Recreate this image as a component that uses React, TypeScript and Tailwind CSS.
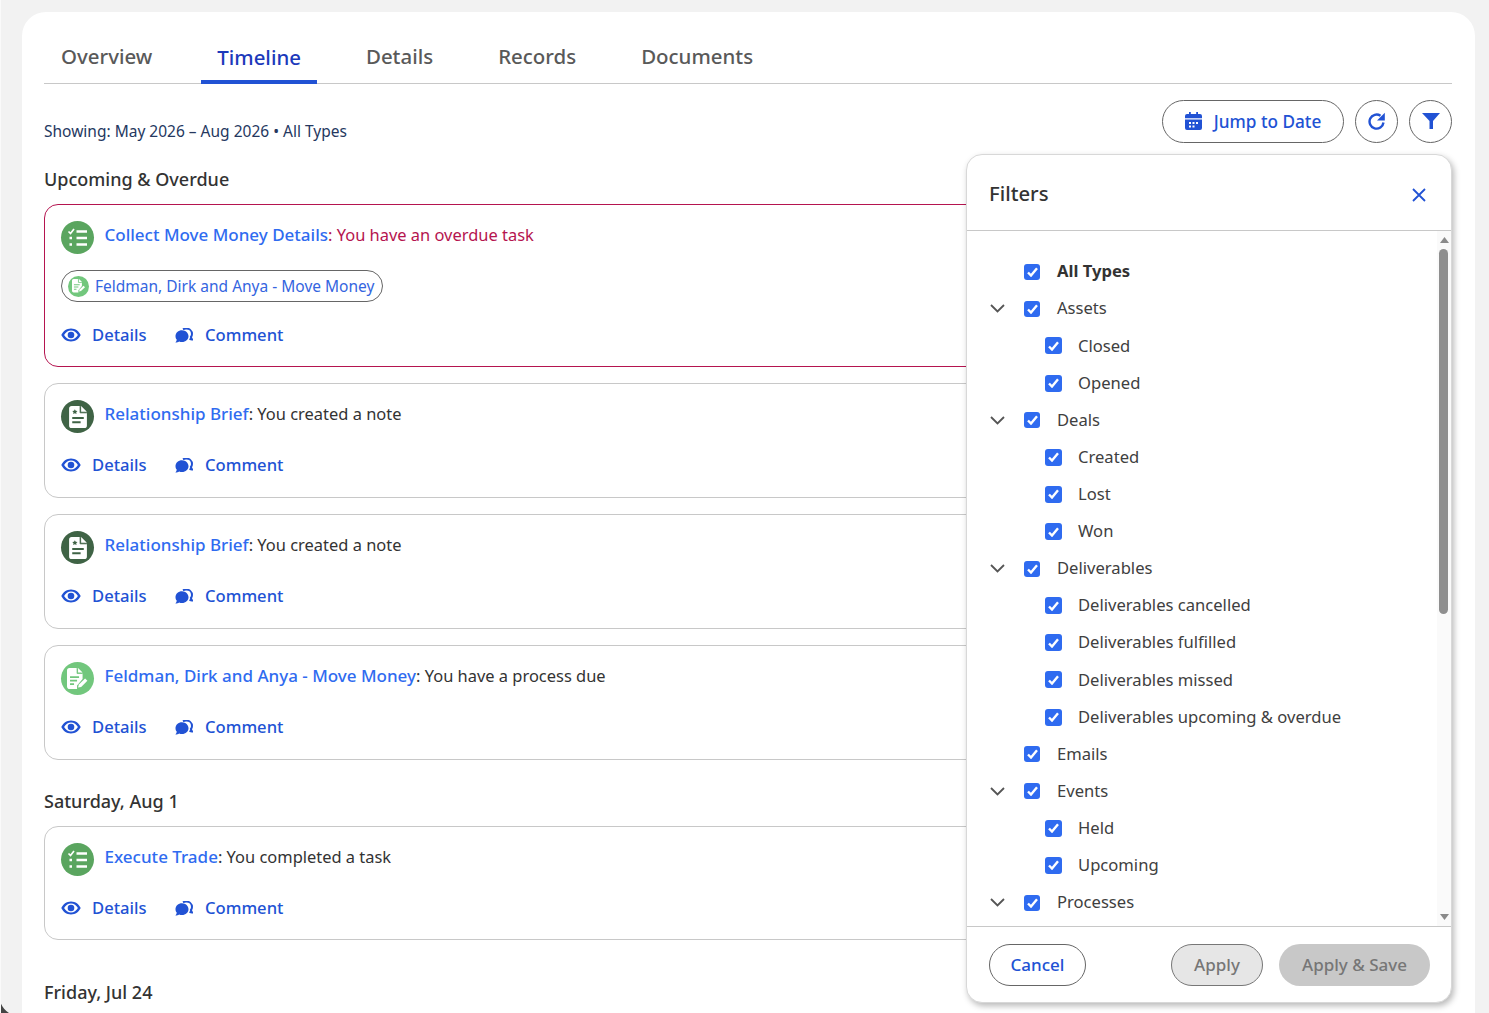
import React from "react";

const FONT = "font-['Noto_Sans',sans-serif]";

function CheckIcon({ kind }: { kind: "task" | "note" | "process" }) {
  if (kind === "task")
    return (
      <span className="flex h-[33px] w-[33px] shrink-0 items-center justify-center rounded-full bg-[#5aa55f]">
        <svg width="21" height="21" viewBox="0 0 21 21" fill="none" stroke="#fff" strokeWidth="2.300">
          <path d="M1.500 4.500l2 2 3.500-4.500" strokeWidth="1.700" />
          <path d="M9.500 4.500H20M9.500 11H20M9.500 17.500H20" />
          <path d="M2.500 11h2.500M2.500 17.500h2.500" />
        </svg>
      </span>
    );
  if (kind === "note")
    return (
      <span className="flex h-[33px] w-[33px] shrink-0 items-center justify-center rounded-full bg-[#3f6345]">
        <svg width="18" height="22" viewBox="0 0 17 21">
          <path d="M2.500 0H10.500L17 6.500V18.500a2.500 2.500 0 0 1-2.500 2.500h-12A2.500 2.500 0 0 1 0 18.500V2.500A2.500 2.500 0 0 1 2.500 0z" fill="#fff" />
          <path d="M10.500 0v6.500H17" fill="#3f6345" stroke="#3f6345" strokeWidth="0.8" />
          <path d="M11.500 0L17 5.500h-5.500z" fill="#fff" />
          <path d="M3 11.500h11M3 15.500h8" stroke="#3f6345" strokeWidth="1.900" />
          <path d="M5.500 3l.8 1.600 1.700.2-1.200 1.200.3 1.700-1.600-.8-1.600.8.3-1.700L3 4.800l1.700-.2z" fill="#3f6345" />
        </svg>
      </span>
    );
  return <ProcessIcon size={33} />;
}

function ProcessIcon({ size }: { size: number }) {
  const s = size * 0.64;
  return (
    <span
      className="flex shrink-0 items-center justify-center rounded-full bg-[#72c77d]"
      style={{ width: size, height: size }}
    >
      <svg width={s} height={s} viewBox="0 0 21 21">
        <path d="M2.500 0H10L15.500 5.500V11L10 17.500V21H2.500A2.500 2.500 0 0 1 0 18.500V2.500A2.500 2.500 0 0 1 2.500 0z" fill="#fff" />
        <path d="M10 0v5.500h5.500" fill="#72c77d" stroke="#72c77d" strokeWidth="0.8" />
        <path d="M11 0l4.500 4.500H11z" fill="#fff" />
        <path d="M3 9h9M3 12.500h7M3 16h4" stroke="#72c77d" strokeWidth="1.700" />
        <path d="M11 19.500l.8-3L18 10.500l2.300 2.200-6.200 6.100z" fill="#fff" />
      </svg>
    </span>
  );
}

function Eye() {
  return (
    <svg width="20" height="14" viewBox="0 0 20 14" fill="none">
      <path
        fillRule="evenodd"
        fill="#2152d4"
        d="M10 .5C5.500.5 2 3.300.300 7 2 10.700 5.500 13.500 10 13.500S18 10.700 19.700 7C18 3.300 14.500.5 10 .5zM10 2.500c3 0 5.400 1.800 6.900 4.500-1.500 2.700-3.900 4.500-6.900 4.500S4.600 9.700 3.100 7C4.600 4.300 7 2.500 10 2.500z"
      />
      <circle cx="10" cy="7" r="3.300" fill="#2152d4" />
    </svg>
  );
}

function Bubbles() {
  return (
    <svg width="18" height="15" viewBox="0 0 18 15" fill="#2152d4">
      <path d="M7 2.200C3.300 2.200.5 4.800.5 8.200c0 1.400.5 2.600 1.300 3.500-.2 1-.7 2-1.400 2.800 1.500 0 2.800-.5 3.700-1.100.9.400 1.800.6 2.900.6 3.700 0 6.500-2.600 6.500-5.800S10.700 2.200 7 2.200z" />
      <path
        d="M8 1.300C8.900.8 10 .6 11.100.6c3.400 0 5.900 2.300 5.900 5.300 0 1.200-.4 2.300-1.100 3.100.2.900.6 1.800 1.100 2.400-1 0-1.800-.3-2.500-.6"
        fill="none"
        stroke="#2152d4"
        strokeWidth="2"
      />
    </svg>
  );
}

function Actions() {
  return (
    <div className="flex items-center text-[16.6px] font-medium leading-6 text-[#2152d4]">
      <span className="flex w-[114px] items-center">
        <span className="mr-[11px] flex w-[20px] justify-center">
          <Eye />
        </span>
        Details
      </span>
      <span className="flex items-center">
        <span className="mr-[12px] flex w-[18px] justify-center">
          <Bubbles />
        </span>
        Comment
      </span>
    </div>
  );
}

function Card({
  kind,
  title,
  text,
  overdue,
  chip,
  className,
}: {
  kind: "task" | "note" | "process";
  title: string;
  text: string;
  overdue?: boolean;
  chip?: string;
  className?: string;
}) {
  return (
    <div
      className={
        "rounded-[14px] border px-4 " +
        (overdue ? "border-[#b5144f] " : "border-[#c8c8c8] ") +
        (className ?? "")
      }
    >
      <div className="flex items-center gap-[10.5px] leading-6">
        <CheckIcon kind={kind} />
        <span className="relative top-[-3px]">
          <span className="text-[17px] font-medium text-[#2f6bf0]">{title}</span>
          <span className={"text-[16.45px] " + (overdue ? "text-[#b5144f]" : "text-[#333333]")}>: {text}</span>
        </span>
      </div>
      {chip && (
        <div className="mt-[16px] flex h-[32px] w-[322px] items-center gap-[6px] rounded-full border border-[#666666] pl-[6px] text-[15.5px] text-[#3465e0]">
          <ProcessIcon size={21} />
          <span className="relative top-[0.5px]">{chip}</span>
        </div>
      )}
      <div className={chip ? "mt-[21px]" : "mt-[20px]"}>
        <Actions />
      </div>
    </div>
  );
}

function Box({ small }: { small?: boolean }) {
  return (
    <span
      className={
        "flex shrink-0 items-center justify-center rounded-[3px] bg-[#2f6bf0] " +
        (small ? "h-4 w-4" : "h-[17px] w-[17px]")
      }
    >
      <svg width="11" height="10" viewBox="0 0 11 10" fill="none" stroke="#fff" strokeWidth="2.400">
        <path d="M1 5.500l3 3L10 1.300" />
      </svg>
    </span>
  );
}

type Row = { label: string; level: 0 | 1; chevron?: boolean; bold?: boolean };

const rows: Row[] = [
  { label: "All Types", level: 0, bold: true },
  { label: "Assets", level: 0, chevron: true },
  { label: "Closed", level: 1 },
  { label: "Opened", level: 1 },
  { label: "Deals", level: 0, chevron: true },
  { label: "Created", level: 1 },
  { label: "Lost", level: 1 },
  { label: "Won", level: 1 },
  { label: "Deliverables", level: 0, chevron: true },
  { label: "Deliverables cancelled", level: 1 },
  { label: "Deliverables fulfilled", level: 1 },
  { label: "Deliverables missed", level: 1 },
  { label: "Deliverables upcoming & overdue", level: 1 },
  { label: "Emails", level: 0 },
  { label: "Events", level: 0, chevron: true },
  { label: "Held", level: 1 },
  { label: "Upcoming", level: 1 },
  { label: "Processes", level: 0, chevron: true },
];

function FilterRow({ r }: { r: Row }) {
  return (
    <div className="flex h-[37.12px] items-center text-[16.6px] text-[#404040]">
      {r.level === 0 ? (
        <>
          <span className="flex w-[57px] justify-start pl-[23px]">
            {r.chevron && (
              <svg width="15" height="9" viewBox="0 0 15 9" fill="none" stroke="#555" strokeWidth="1.800">
                <path d="M1 1l6.500 6.500L14 1" />
              </svg>
            )}
          </span>
          <Box small />
          <span className={"ml-[17px] " + (r.bold ? "font-bold text-[#333333]" : "")}>{r.label}</span>
        </>
      ) : (
        <>
          <span className="w-[78px]" />
          <Box />
          <span className="ml-[16px]">{r.label}</span>
        </>
      )}
    </div>
  );
}

function FilterPanel() {
  return (
    <div className="absolute left-[944px] top-[142px] flex h-[849px] w-[486px] flex-col overflow-hidden rounded-[16px] border border-[#d8d8d8] bg-white shadow-[2px_3px_6px_rgba(0,0,0,0.28)]">
      <div className="flex h-[76px] shrink-0 items-center justify-between border-b border-[#c8c8c8] pl-[22px] pr-[25px]">
        <span className="relative top-[1px] text-[20.3px] font-medium text-[#333333]">Filters</span>
        <svg className="relative top-[2px]" width="14" height="14" viewBox="0 0 14 14" fill="none" stroke="#2152d4" strokeWidth="1.800">
          <path d="M1 1l12 12M13 1L1 13" />
        </svg>
      </div>
      <div className="relative min-h-0 flex-1 overflow-hidden pt-[22.2px]">
        {rows.map((r) => (
          <FilterRow key={r.label} r={r} />
        ))}
        <div className="absolute bottom-0 right-0 top-0 w-[14px] bg-[#fafafa]">
          <svg className="absolute left-[3px] top-[6px]" width="9" height="6" viewBox="0 0 9 6" fill="#8a8a8a">
            <path d="M4.500 0L9 6H0z" />
          </svg>
          <div className="absolute left-[2px] top-[18px] h-[365px] w-[9px] rounded-full bg-[#8f8f8f]" />
          <svg className="absolute bottom-[6px] left-[3px]" width="9" height="6" viewBox="0 0 9 6" fill="#8a8a8a">
            <path d="M0 0h9L4.500 6z" />
          </svg>
        </div>
      </div>
      <div className="flex h-[76px] shrink-0 items-center border-t border-[#c8c8c8] pl-[22px] pr-[21px] text-[17px] font-medium">
        <span className="flex h-[42px] w-[97px] items-center justify-center rounded-full border border-[#666666] text-[#2152d4]">
          Cancel
        </span>
        <span className="ml-auto flex h-[42px] w-[92px] items-center justify-center rounded-full border border-[#777777] bg-[#e6e6e6] text-[#767676]">
          Apply
        </span>
        <span className="ml-[16px] flex h-[42px] w-[151px] items-center justify-center rounded-full bg-[#c8c8c8] text-[#767676]">
          Apply &amp; Save
        </span>
      </div>
    </div>
  );
}

export default function App() {
  const tabs = [
    { t: "Overview" },
    { t: "Timeline", active: true },
    { t: "Details" },
    { t: "Records" },
    { t: "Documents" },
  ];
  return (
    <div className={"relative h-[1013px] overflow-hidden border-l border-[#fafafa] bg-[#f2f2f2] pl-[21px] pr-[14px] pt-[12px] " + FONT}>
      <div className="relative h-[1100px] rounded-[24px] bg-white pl-[22px] pr-[23px]">
        <div className="flex h-[72px] items-end gap-[33px] border-b border-[#c8c8c8] pl-[1px] text-[20.45px] font-medium text-[#595959]">
          {tabs.map((t) => (
            <div
              key={t.t}
              className={
                "flex h-[48px] items-start justify-center px-4 pt-[6px] " +
                (t.active ? "mb-[-1px] border-b-[4px] border-[#2152d4] text-[#1c39bb]" : "")
              }
            >
              {t.t}
            </div>
          ))}
        </div>

        <div className="mt-[15px] flex h-[44px] items-center justify-between">
          <span className="relative top-[11px] text-[15.5px] text-[#25385f]">
            Showing: May 2026 – Aug 2026 • All Types
          </span>
          <div className="flex items-center gap-[11px]">
            <span className="flex h-[43px] w-[182px] items-center justify-center gap-[12px] rounded-full border border-[#666666] text-[17.2px] font-medium text-[#2152d4]">
              <svg width="17" height="18" viewBox="0 0 17 18" fill="#2152d4">
                <path
                  fillRule="evenodd"
                  d="M4 0h1.800v2h5.400V0H13v2h2a2 2 0 0 1 2 2v2.300H0V4a2 2 0 0 1 2-2h2zM0 7.500h17V16a2 2 0 0 1-2 2H2a2 2 0 0 1-2-2zM4 10h2v2H4zM7.500 10h2v2h-2zM11 10h2v2h-2zM4 13.500h2v2H4zM7.500 13.500h2v2h-2z"
                />
              </svg>
              <span className="relative top-[1px]">Jump to Date</span>
            </span>
            <span className="flex h-[43px] w-[43px] items-center justify-center rounded-full border border-[#666666]">
              <svg width="18" height="18" viewBox="0 0 18 18" fill="none" stroke="#2152d4" strokeWidth="2.400">
                <path d="M15.500 10.500A7 7 0 1 1 12.500 3.800" />
                <path d="M16.800 .8v7.700H9z" fill="#2152d4" stroke="none" />
              </svg>
            </span>
            <span className="flex h-[43px] w-[43px] items-center justify-center rounded-full border border-[#666666]">
              <svg width="18" height="16" viewBox="0 0 18 16" fill="#2152d4">
                <path d="M0 0h18L11 8v8H7.500V8z" />
              </svg>
            </span>
          </div>
        </div>

        <h2 className="mt-[22px] text-[18px] font-medium leading-[28px] text-[#333333]">Upcoming &amp; Overdue</h2>
        <div className="mt-[11px] flex flex-col gap-[16px]">
          <Card
            overdue
            kind="task"
            title="Collect Move Money Details"
            text="You have an overdue task"
            chip="Feldman, Dirk and Anya - Move Money"
            className="h-[163px] pt-[16px]"
          />
          <Card kind="note" title="Relationship Brief" text="You created a note" className="h-[115px] pt-[16px]" />
          <Card kind="note" title="Relationship Brief" text="You created a note" className="h-[115px] pt-[16px]" />
          <Card
            kind="process"
            title="Feldman, Dirk and Anya - Move Money"
            text="You have a process due"
            className="h-[115px] pt-[16px]"
          />
        </div>
        <h2 className="mt-[27px] text-[18px] font-medium leading-[28px] text-[#333333]">Saturday, Aug 1</h2>
        <div className="mt-[11px]">
          <Card kind="task" title="Execute Trade" text="You completed a task" className="h-[114px] pt-[16px]" />
        </div>
        <h2 className="mt-[38px] text-[18px] font-medium leading-[28px] text-[#333333]">Friday, Jul 24</h2>

        <FilterPanel />
      </div>
      <svg className="absolute bottom-0 left-[-1px]" width="9" height="12" viewBox="0 0 9 12" fill="#444444">
        <path d="M0 0C1 4 4 9 9 12H0z" />
      </svg>
    </div>
  );
}
